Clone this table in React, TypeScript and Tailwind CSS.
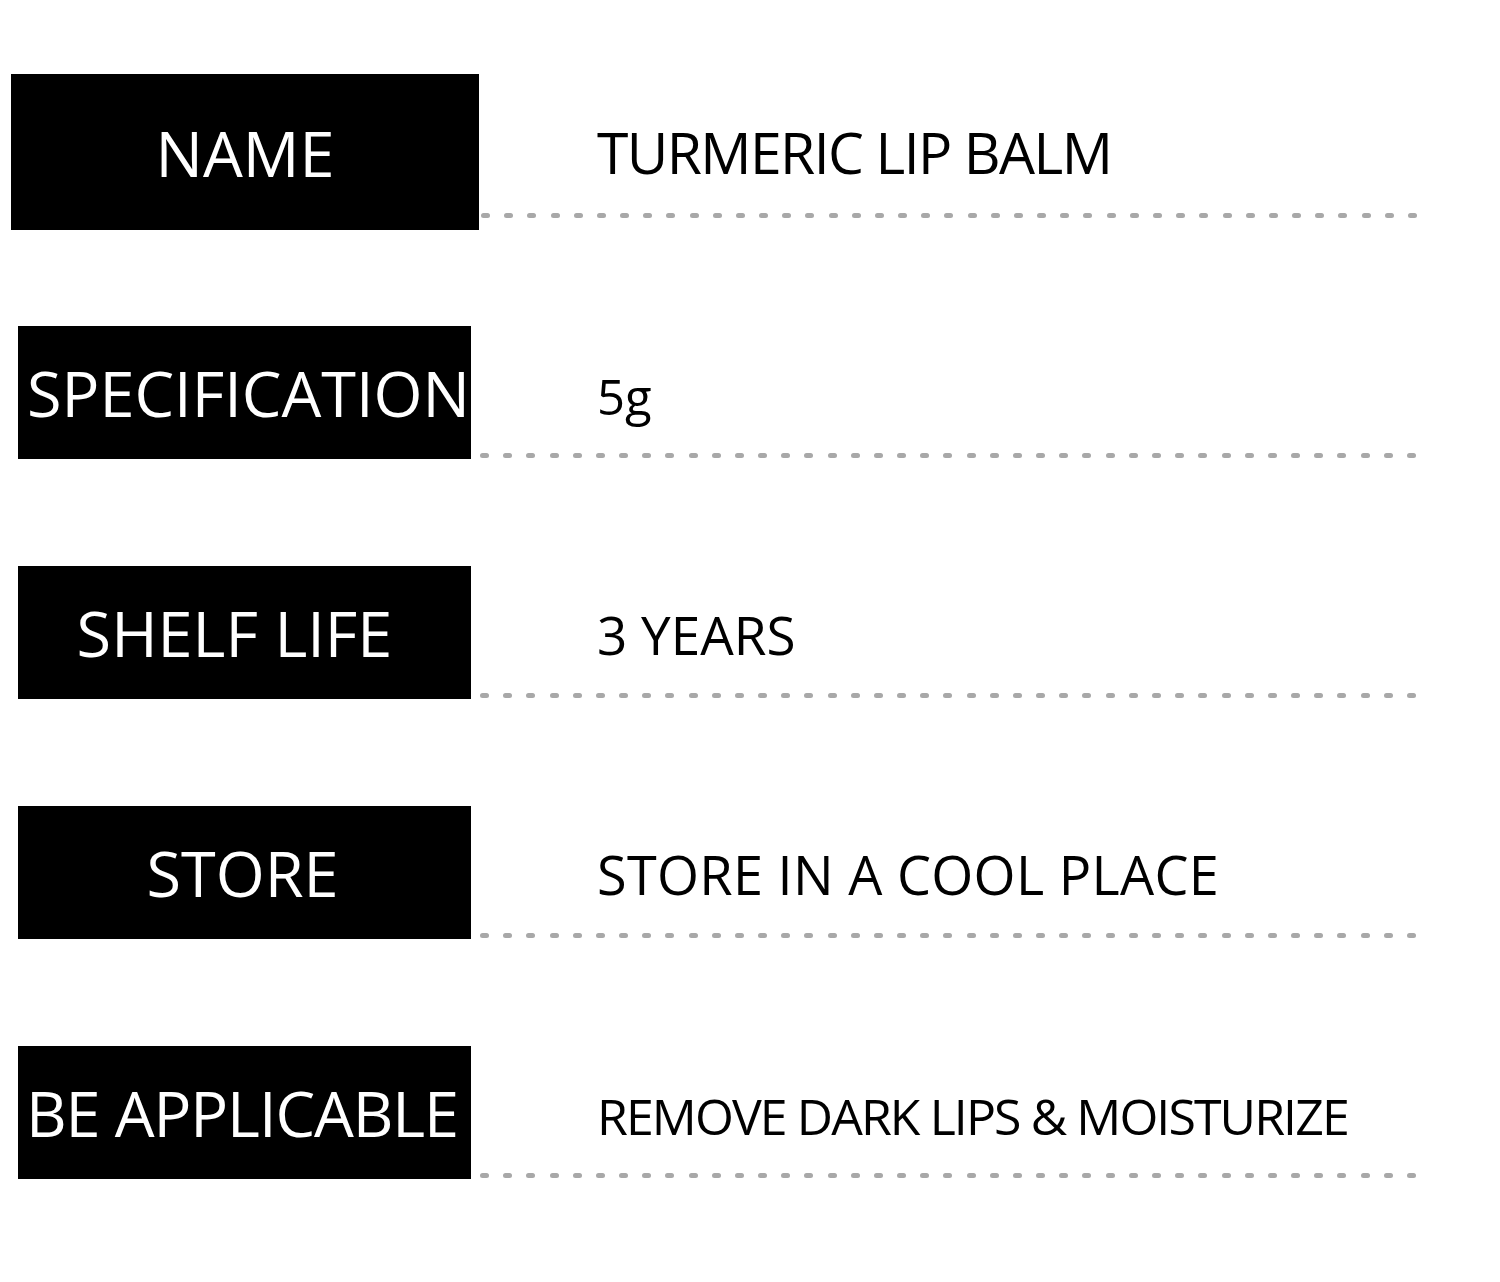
const rows = [
	{
		label: "NAME",
		labelClass: "",
		value: "TURMERIC LIP BALM",
		valueClass: "text-[57px] tracking-[-1.6px]",
		first: true,
	},
	{ label: "SPECIFICATION", labelClass: "pl-[8px]", value: "5g", valueClass: "text-[49px]" },
	{ label: "SHELF LIFE", labelClass: "pr-[20px]", value: "3 YEARS", valueClass: "text-[53px]" },
	{ label: "STORE", labelClass: "pr-[4px]", value: "STORE IN A COOL PLACE", valueClass: "text-[54px] tracking-[0.3px]" },
	{
		label: "BE APPLICABLE",
		labelClass: "pr-[5px] tracking-[-1.1px]",
		value: "REMOVE DARK LIPS & MOISTURIZE",
		valueClass: "text-[50px] tracking-[-1.9px]",
	},
];

const DotLine = ({ first }: { first?: boolean }) => (
	<div className={`flex justify-between ${first ? "ml-[2px] mb-[12px]" : "ml-[9px] mb-[1px]"} w-[936px]`}>
		{Array.from({ length: 41 }).map((_, i) => (
			<span key={i} className="block w-[9px] h-[5px] rounded-full bg-[#a8a8a8] blur-[0.7px]" />
		))}
	</div>
);

export default function App() {
	return (
		<div className="w-[1500px] h-[1282px] bg-white font-['Open_Sans',sans-serif] overflow-hidden">
			<div className="flex flex-col pt-[74px] gap-[107px]">
				{rows.map((row) => (
					<div key={row.label} className={`flex ${row.first ? "-mb-[11px]" : ""}`}>
						<div
							className={`shrink-0 flex items-center justify-center bg-black text-white text-[63px] leading-none whitespace-nowrap ${
								row.first ? "ml-[11px] w-[468px] h-[156px]" : "ml-[18px] w-[453px] h-[133px]"
							} ${row.labelClass}`}
						>
							{row.label}
						</div>
						<div className="flex flex-col justify-end">
							<div
								className={`${row.valueClass} leading-none text-black whitespace-nowrap ${
									row.first ? "pl-[118px]" : "pl-[126px]"
								}`}
							>
								{row.value}
							</div>
							<div className="mt-[32px]">
								<DotLine first={row.first} />
							</div>
						</div>
					</div>
				))}
			</div>
		</div>
	);
}
